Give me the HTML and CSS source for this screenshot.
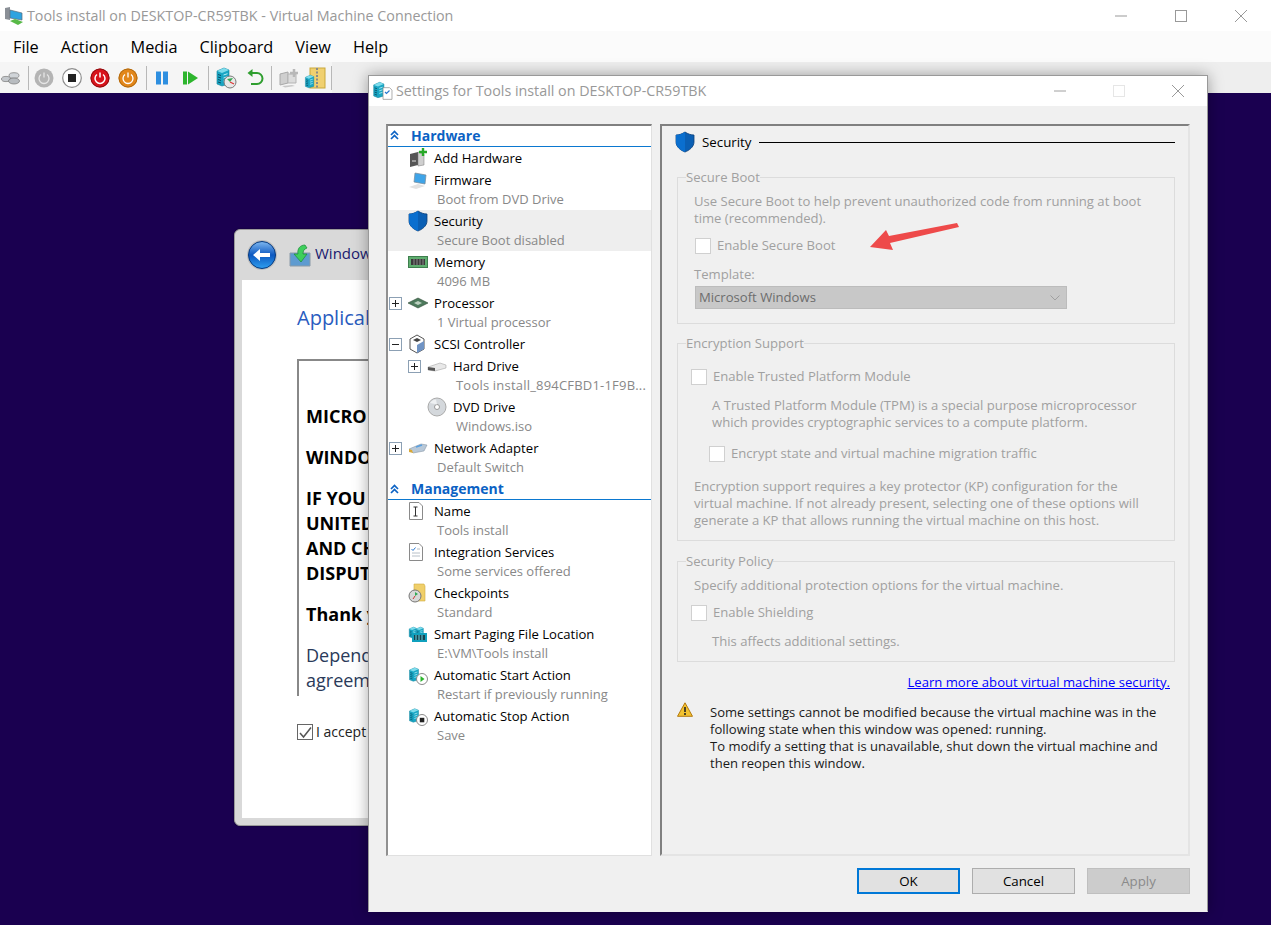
FILE: index.html
```html
<!DOCTYPE html>
<html lang="en">
<head>
<meta charset="utf-8">
<title>Tools install on DESKTOP-CR59TBK - Virtual Machine Connection</title>
<link rel="stylesheet" href="styles.css">
</head>
<body>
<svg class="defs" width="0" height="0" aria-hidden="true">
  <defs>
    <symbol id="server" viewBox="0 0 20 20">
      <path d="M2 4 L9 1 L14 3 L14 17 L7 19 L2 17Z" fill="#19a6c4" stroke="#0f7f99" stroke-width=".6"/>
      <path d="M2 4 L7 6 L14 3 L9 1Z" fill="#7fdcec"/>
      <path d="M3 7.5l3 1M3 10l3 1M3 12.5l3 1M3 15l3 1" stroke="#0a4f66" stroke-width="1"/>
      <path d="M8.500 8l4-1.300M8.500 11l4-1.300M8.500 14l4-1.300" stroke="#b4eef7" stroke-width="1"/>
    </symbol>
    <symbol id="shield" viewBox="0 0 20 22">
      <path d="M10 1 C7 3 4 4 1 4 L1 11 C1 16 6 19.500 10 21 C14 19.500 19 16 19 11 L19 4 C16 4 13 3 10 1Z" fill="#0a5fb4" stroke="#0b3f78" stroke-width=".8"/>
      <path d="M10 1 C7 3 4 4 1 4 L1 11 C1 16 6 19.500 10 21Z" fill="#0a6fcf"/>
    </symbol>
    <symbol id="page" viewBox="0 0 16 20">
      <path d="M1.500 1.500 H11 L14.500 5 V18.500 H1.500Z" fill="#fff" stroke="#8a8a8a" stroke-width="1"/>
    </symbol>
  </defs>
</svg>

<div class="vm">
  <header class="titlebar">
    <svg class="app-icon" width="20" height="20" viewBox="0 0 20 20">
      <path d="M1 2 L6 1 L6 14 L1 13Z" fill="#8a8f96"/>
      <path d="M6 4 L18 7 L18 14 L6 12Z" fill="#2ea3e0" stroke="#5b6b78" stroke-width=".7"/>
      <path d="M6 15 L14 19 L19 16 L11 13Z" fill="#58b947"/>
    </svg>
    <span class="title-text">Tools install on DESKTOP-CR59TBK - Virtual Machine Connection</span>
    <div class="caption">
      <svg class="cap-btn" width="16" height="16" viewBox="0 0 16 16"><path d="M2 8H14" stroke="#999" stroke-width="1"/></svg>
      <svg class="cap-btn" width="16" height="16" viewBox="0 0 16 16"><rect x="2.500" y="2.500" width="11" height="11" fill="none" stroke="#999"/></svg>
      <svg class="cap-btn" width="16" height="16" viewBox="0 0 16 16"><path d="M2 2L14 14M14 2L2 14" stroke="#999" stroke-width="1"/></svg>
    </div>
  </header>
  <nav class="menubar">
    <span>File</span><span>Action</span><span>Media</span><span>Clipboard</span><span>View</span><span>Help</span>
  </nav>
  <div class="toolband">
    <div class="toolbar">
      <svg class="tb first" width="20" height="14" viewBox="0 0 20 14"><ellipse cx="5" cy="8" rx="4.500" ry="2.600" fill="#c4c8cc" stroke="#777" stroke-width=".7"/><ellipse cx="13" cy="4.500" rx="5" ry="2.800" fill="#d0d4d8" stroke="#777" stroke-width=".7"/><ellipse cx="13" cy="10" rx="5.500" ry="3" fill="#b8bcc0" stroke="#777" stroke-width=".7"/></svg>
      <i class="sep s1"></i>
      <svg class="tb" width="20" height="20" viewBox="0 0 20 20"><circle cx="10" cy="10" r="9.500" fill="#b4b4b4"/><path d="M7 6.500a5 5 0 1 0 6 0M10 4.500v5" fill="none" stroke="#e6e6e6" stroke-width="1.300"/></svg>
      <svg class="tb" width="20" height="20" viewBox="0 0 20 20"><circle cx="10" cy="10" r="9.300" fill="#fff" stroke="#8d8d8d" stroke-width="1.200"/><rect x="6" y="6" width="8" height="8" fill="#222"/></svg>
      <svg class="tb" width="20" height="20" viewBox="0 0 20 20"><circle cx="10" cy="10" r="9.500" fill="#d8141c"/><circle cx="10" cy="10" r="9" fill="none" stroke="#8d0f12"/><path d="M7 6.500a5 5 0 1 0 6 0M10 4.500v5" fill="none" stroke="#fff" stroke-width="1.500"/></svg>
      <svg class="tb" width="20" height="20" viewBox="0 0 20 20"><circle cx="10" cy="10" r="9.500" fill="#e2861a"/><circle cx="10" cy="10" r="9" fill="none" stroke="#b06a10"/><path d="M7 6.500a5 5 0 1 0 6 0M10 4.500v5" fill="none" stroke="#fff" stroke-width="1.300"/></svg>
      <i class="sep"></i>
      <svg class="tb" width="20" height="20" viewBox="0 0 20 20"><rect x="4" y="3.500" width="5" height="13" fill="#2e8fe0"/><rect x="11" y="3.500" width="5" height="13" fill="#2e8fe0"/></svg>
      <svg class="tb" width="20" height="20" viewBox="0 0 20 20"><rect x="3" y="3.500" width="4" height="13" fill="#2db52d"/><path d="M8 3.500L18 10 8 16.500Z" fill="#2db52d"/></svg>
      <i class="sep s3"></i>
      <svg class="tb" width="22" height="22" viewBox="0 0 22 22"><use href="#server" width="20" height="20"/><circle cx="15" cy="15" r="6" fill="#e8e8e8" stroke="#7a7a7a"/><path d="M15 15L12 12L18 11Z" fill="#34a853"/><path d="M15 15L19 17" stroke="#d33" stroke-width="1.200"/></svg>
      <svg class="tb" width="20" height="20" viewBox="0 0 20 20"><path d="M6 5h6a4.500 4.500 0 0 1 0 11H6" fill="none" stroke="#2f9e2f" stroke-width="2"/><path d="M7.500 1L2.500 5l5 4Z" fill="#2f9e2f"/></svg>
      <i class="sep s4"></i>
      <svg class="tb" width="22" height="20" viewBox="0 0 22 20"><path d="M2 6l8-2v11l-8 2z" fill="#cfcfcf" stroke="#a8a8a8"/><path d="M10 6h8v9h-8z" fill="#dcdcdc" stroke="#b5b5b5"/><path d="M16 1v8M12 5h8" stroke="#b8b8b8" stroke-width="2.500"/><path d="M4 18l10-1 3 1-10 1.500z" fill="#c8c8c8"/></svg>
      <svg class="tb last-tb" width="22" height="22" viewBox="0 0 22 22"><rect x="6" y="1" width="15" height="20" fill="#f0d070" stroke="#c9a83a"/><path d="M13 1v20" stroke="#8a8a8a" stroke-width="2" stroke-dasharray="2 1.500"/><use href="#server" x="0" y="7" width="14" height="15"/></svg>
      <i class="sep end"></i>
    </div>
  </div>

  <main class="desktop">
    <section class="setup">
      <div class="setup-head">
        <svg width="30" height="30" viewBox="0 0 30 30" class="back">
          <defs><linearGradient id="bk" x1="0" y1="0" x2="0" y2="1"><stop offset="0" stop-color="#7fb8f0"/><stop offset=".5" stop-color="#0d58c0"/><stop offset="1" stop-color="#2f9ff0"/></linearGradient></defs>
          <circle cx="15" cy="15" r="15" fill="#bdbdbd"/><circle cx="15" cy="15" r="13.500" fill="url(#bk)" stroke="#053a80"/>
          <path d="M6 15l7-6v4h10v4H13v4z" fill="#fff"/>
        </svg>
        <svg width="22" height="24" viewBox="0 0 22 24" class="setup-ico">
          <path d="M1 10h20v13H1z" fill="#5e9bd0" stroke="#8a9aa8"/>
          <path d="M16 2C11 2 8 6 9 11H5l7 8 6-8h-4c0-3 1-5 4-6z" fill="#3ecf5c" stroke="#1a8a38" stroke-width=".7"/>
        </svg>
        <span class="setup-title">Windows</span>
      </div>
      <div class="setup-body">
        <h2 class="setup-h">Applicable</h2>
        <div class="license">
          <p class="b">MICRO</p>
          <p class="b">WINDOWS</p>
          <p class="b">IF YOU<br>UNITED<br>AND CHECK<br>DISPUTES</p>
          <p class="b">Thank you</p>
          <p class="n">Depending<br>agreement</p>
        </div>
        <div class="accept"><span class="acc-box"><svg width="15" height="15" viewBox="0 0 15 15"><path d="M2 8l3.500 4L13 2.500" fill="none" stroke="#555" stroke-width="1.500"/></svg></span>I accept</div>
      </div>
    </section>

    <section class="dialog">
      <header class="dlg-title">
        <svg width="22" height="22" viewBox="0 0 22 22" class="dlg-ico"><use href="#server" width="17" height="20"/><use href="#page" x="10" y="6" width="11" height="15"/><path d="M13 12l1.500 1.500 3-3" stroke="#2a78d0" fill="none" stroke-width="1.200"/></svg>
        <span class="dlg-text">Settings for Tools install on DESKTOP-CR59TBK</span>
        <div class="dlg-caption">
          <svg width="14" height="14" viewBox="0 0 14 14"><path d="M1 7H13" stroke="#a0a0a0"/></svg>
          <svg width="14" height="14" viewBox="0 0 14 14"><rect x="1.500" y="1.500" width="11" height="11" fill="none" stroke="#e6e6e6"/></svg>
          <svg width="14" height="14" viewBox="0 0 14 14"><path d="M1 1L13 13M13 1L1 13" stroke="#999"/></svg>
        </div>
      </header>
      <div class="dlg-body">
        <div class="panes">
          <aside class="tree">
            <div class="group"><svg class="chev" width="9" height="10" viewBox="0 0 9 10"><path d="M1 5l3.500-3.500L8 5M1 9l3.500-3.500L8 9" fill="none" stroke="#0b62c4" stroke-width="1.700"/></svg><b>Hardware</b></div>
            <div class="item one">
              <div class="head"><span class="exp"></span><span class="ico"><svg width="20" height="20" viewBox="0 0 20 20"><path d="M2 6l8-2v13l-8 2z" fill="#555"/><path d="M10 4l6 2v11l-6 1z" fill="#cfcfcf" stroke="#777" stroke-width=".5"/><path d="M4 13h4" stroke="#ddd"/><path d="M15 0v8M11 4h8" stroke="#27a827" stroke-width="2.400"/></svg></span>Add Hardware</div>
            </div>
            <div class="item">
              <div class="head"><span class="exp"></span><span class="ico"><svg width="20" height="20" viewBox="0 0 20 20"><path d="M7 3l11 2-1 9L6 12z" fill="#3fa4e8" stroke="#7a8a96" stroke-width=".7"/><path d="M1 17l9-3 7 2-9 3z" fill="#e2e2e2"/></svg></span>Firmware</div>
              <div class="sub">Boot from DVD Drive</div>
            </div>
            <div class="item sel">
              <div class="head"><span class="exp"></span><span class="ico"><svg width="20" height="22" viewBox="0 0 20 22"><use href="#shield"/></svg></span>Security</div>
              <div class="sub">Secure Boot disabled</div>
            </div>
            <div class="item">
              <div class="head"><span class="exp"></span><span class="ico"><svg width="20" height="14" viewBox="0 0 20 14"><rect x=".5" y="1.500" width="19" height="11" fill="#5fae6f" stroke="#3e7f4e"/><path d="M3 4h14v6H3z" fill="#3a3a3a"/><path d="M6 4v6M9 4v6M12 4v6M15 4v6" stroke="#888"/></svg></span>Memory</div>
              <div class="sub">4096 MB</div>
            </div>
            <div class="item">
              <div class="head"><span class="exp plus"></span><span class="ico"><svg width="20" height="12" viewBox="0 0 20 12"><path d="M0 6l10-5 10 5-10 5z" fill="#4d7a5c" stroke="#2f4a38" stroke-width=".6"/><path d="M6 6l4-2 4 2-4 2z" fill="#bcd0c0"/></svg></span>Processor</div>
              <div class="sub">1 Virtual processor</div>
            </div>
            <div class="item one">
              <div class="head"><span class="exp minus"></span><span class="ico"><svg width="20" height="20" viewBox="0 0 20 20"><path d="M2 5l7-4 7 4v10l-7 4-7-4z" fill="#fff" stroke="#555"/><path d="M9 19l7-4V7l-7 4z" fill="#6f93c4"/><path d="M5 6l4-2 4 2-4 2z" fill="#444"/></svg></span>SCSI Controller</div>
            </div>
            <div class="item child">
              <div class="head"><span class="exp plus"></span><span class="ico"><svg width="20" height="12" viewBox="0 0 20 12"><path d="M1 7l12-4 6 2v3L8 11 1 10z" fill="#e8e8e8" stroke="#999" stroke-width=".5"/><path d="M1 7l7 1v3L1 10z" fill="#555"/></svg></span>Hard Drive</div>
              <div class="sub hash">Tools install_894CFBD1-1F9B...</div>
            </div>
            <div class="item child">
              <div class="head"><span class="exp"></span><span class="ico"><svg width="20" height="20" viewBox="0 0 20 20"><circle cx="10" cy="10" r="9" fill="#d4d8dc" stroke="#aaa"/><circle cx="10" cy="10" r="2.500" fill="#fff" stroke="#999"/><path d="M3 6a8 8 0 0 1 6-3.500L10 7.500z" fill="#eef0f2"/></svg></span>DVD Drive</div>
              <div class="sub">Windows.iso</div>
            </div>
            <div class="item">
              <div class="head"><span class="exp plus"></span><span class="ico"><svg width="20" height="12" viewBox="0 0 20 12"><path d="M1 7l12-5 6 1-3 6-11 2z" fill="#b8c8d8" stroke="#7a8a9a" stroke-width=".5"/><path d="M1 7l3 1 1 3-4-1z" fill="#d8a838"/><path d="M8 5l6-2" stroke="#5aa0e0" stroke-width="1.500"/></svg></span>Network Adapter</div>
              <div class="sub">Default Switch</div>
            </div>
            <div class="group mgmt"><svg class="chev" width="9" height="10" viewBox="0 0 9 10"><path d="M1 5l3.500-3.500L8 5M1 9l3.500-3.500L8 9" fill="none" stroke="#0b62c4" stroke-width="1.700"/></svg><b>Management</b></div>
            <div class="item">
              <div class="head"><span class="exp"></span><span class="ico"><svg width="16" height="20" viewBox="0 0 16 20"><use href="#page"/><path d="M5.500 6h4M7.500 6v9M5.500 15h4" stroke="#333" fill="none"/></svg></span>Name</div>
              <div class="sub">Tools install</div>
            </div>
            <div class="item">
              <div class="head"><span class="exp"></span><span class="ico"><svg width="16" height="20" viewBox="0 0 16 20"><use href="#page"/><path d="M3.500 7l1.500 1.500 2.500-3" stroke="#2a78d0" fill="none"/><path d="M9 7h3M4 11h8M4 14h8" stroke="#b8c0c8"/></svg></span>Integration Services</div>
              <div class="sub">Some services offered</div>
            </div>
            <div class="item">
              <div class="head"><span class="exp"></span><span class="ico"><svg width="20" height="20" viewBox="0 0 20 20"><path d="M6 1h10l1 2v15H6z" fill="#f0cf6a" stroke="#d0ac40" stroke-width=".6"/><circle cx="7" cy="13" r="6" fill="#d8d8d8" stroke="#777"/><path d="M7 13V9l3 2z" fill="#34a853"/><path d="M7 13l-2 3" stroke="#c33"/></svg></span>Checkpoints</div>
              <div class="sub">Standard</div>
            </div>
            <div class="item">
              <div class="head"><span class="exp"></span><span class="ico"><svg width="20" height="18" viewBox="0 0 20 18"><use href="#server" width="12" height="15"/><use href="#server" x="7" y="0" width="12" height="15"/><rect x="4" y="8" width="15" height="9" fill="#0fa0bd"/><path d="M6 10h11v5H6z" fill="#16444f"/><path d="M8 10v5M11 10v5M14 10v5" stroke="#6ad4e4"/></svg></span>Smart Paging File Location</div>
              <div class="sub">E:\VM\Tools install</div>
            </div>
            <div class="item">
              <div class="head"><span class="exp"></span><span class="ico"><svg width="20" height="20" viewBox="0 0 20 20"><use href="#server" width="15" height="19"/><circle cx="14" cy="14" r="5.500" fill="#fff" stroke="#8a8a8a"/><path d="M12.500 11l4 3-4 3z" fill="#2db52d"/></svg></span>Automatic Start Action</div>
              <div class="sub">Restart if previously running</div>
            </div>
            <div class="item">
              <div class="head"><span class="exp"></span><span class="ico"><svg width="20" height="20" viewBox="0 0 20 20"><use href="#server" width="15" height="19"/><circle cx="14" cy="14" r="5.500" fill="#fff" stroke="#8a8a8a"/><rect x="11.800" y="11.800" width="4.500" height="4.500" fill="#222"/></svg></span>Automatic Stop Action</div>
              <div class="sub">Save</div>
            </div>
          </aside>

          <div class="pane">
            <div class="pane-head">
              <svg width="20" height="22" viewBox="0 0 20 22"><use href="#shield"/></svg>
              <span>Security</span><i class="rule"></i>
            </div>
            <fieldset class="box box-boot">
              <legend>Secure Boot</legend>
              <p class="txt">Use Secure Boot to help prevent unauthorized code from running at boot<br>time (recommended).</p>
              <label class="check tight"><span class="cb"></span>Enable Secure Boot</label>
              <div class="tpl-label">Template:</div>
              <div class="select">Microsoft Windows<svg width="10" height="6" viewBox="0 0 10 6"><path d="M.5.500L5 5l4.500-4.500" fill="none" stroke="#a0a0a0"/></svg></div>
            </fieldset>
            <fieldset class="box box-enc">
              <legend>Encryption Support</legend>
              <label class="check"><span class="cb"></span>Enable Trusted Platform Module</label>
              <p class="txt indent">A Trusted Platform Module (TPM) is a special purpose microprocessor<br>which provides cryptographic services to a compute platform.</p>
              <label class="check nested"><span class="cb"></span>Encrypt state and virtual machine migration traffic</label>
              <p class="txt after">Encryption support requires a key protector (KP) configuration for the<br>virtual machine. If not already present, selecting one of these options will<br>generate a KP that allows running the virtual machine on this host.</p>
            </fieldset>
            <fieldset class="box box-pol">
              <legend>Security Policy</legend>
              <p class="txt">Specify additional protection options for the virtual machine.</p>
              <label class="check shield"><span class="cb"></span>Enable Shielding</label>
              <p class="txt indent last">This affects additional settings.</p>
            </fieldset>
            <div class="link-row"><a class="link" href="#">Learn more about virtual machine security.</a></div>
            <div class="warn">
              <svg width="16" height="15" viewBox="0 0 16 15"><path d="M8 .8L15.500 14.300H.5Z" fill="#f2c230" stroke="#b47a10"/><path d="M8 5v5M8 11v2" stroke="#222" stroke-width="1.600"/></svg>
              <p>Some settings cannot be modified because the virtual machine was in the<br>following state when this window was opened: running.<br>To modify a setting that is unavailable, shut down the virtual machine and<br>then reopen this window.</p>
            </div>
          </div>
        </div>
        <footer class="buttons">
          <button class="btn ok">OK</button>
          <button class="btn">Cancel</button>
          <button class="btn off">Apply</button>
        </footer>
      </div>
      <svg class="arrow" width="92" height="30" viewBox="0 0 92 30"><path d="M89 1L91 5 22 21 25 28 2 25 18 8 21 14Z" fill="#ee4a4a"/></svg>
    </section>
  </main>
</div>
</body>
</html>
```
FILE: styles.css
```css
* { box-sizing: border-box; }
html, body { margin: 0; height: 100%; overflow: hidden; }
body { font-family: "Open Sans", "Noto Sans", "Liberation Sans", sans-serif; font-size: 13px; color: #000; background: #1a0050; }
.defs { position: absolute; }

.vm { width: 1271px; height: 925px; display: flex; flex-direction: column; }
.titlebar { height: 31px; background: #fff; display: flex; align-items: center; padding-left: 4px; flex: none; }
.app-icon { flex: none; }
.title-text { margin-left: 3px; font-size: 14.300px; color: #999; }
.caption { margin-left: auto; display: flex; gap: 44px; padding-right: 22px; }

.menubar { height: 31px; background: #fbfbfb; display: flex; align-items: center; gap: 22px; padding-left: 13px; font-size: 16.300px; flex: none; }

.toolband { height: 31px; background: #eeeeee; flex: none; }
.toolbar { width: 332px; height: 31px; background: #f5f5f5; display: flex; align-items: center; padding-left: 1px; }
.tb { flex: none; margin: 0 4px; }
.tb.first { margin: 0; }
.tb.last-tb { margin-left: 0; }
.sep { width: 1px; height: 24px; background: #b8b8b8; margin: 0 1px 0 4px; flex: none; }
.sep.s1 { margin-left: 7px; }
.sep.s3 { margin-right: 2px; }
.sep.s4 { margin: 0 2px; }
.sep.end { margin: 0 0 0 auto; }

.desktop { flex: 1; position: relative; background: #1a0050; }

.setup { position: absolute; left: 234px; top: 136px; width: 560px; height: 597px; background: #d9d9d9; border-radius: 6px; border: 1px solid #9a9a9a; padding: 0 7px 7px; display: flex; flex-direction: column; box-shadow: 0 0 2px rgba(0,0,0,.5); }
.setup-head { height: 50px; display: flex; align-items: center; padding-left: 5px; flex: none; }
.setup-ico { margin-left: 12px; }
.setup-title { margin-left: 4px; font-size: 15px; color: #1a1a6e; padding-bottom: 4px; }
.setup-body { flex: 1; background: #fff; padding: 24px 0 0 55px; }
.setup-h { margin: 0; font-size: 20px; font-weight: 400; color: #2a5cc0; line-height: 27px; }
.license { height: 337px; width: 480px; margin-top: 28px; border-top: 2px solid #888; border-left: 2px solid #888; padding: 43px 0 0 7px; overflow: hidden; font-size: 18px; line-height: 25px; white-space: nowrap; }
.license p { margin: 0 0 16px; }
.license .b { font-weight: 700; }
.license .n { color: #2a3a5a; }
.accept { display: flex; align-items: center; margin-top: 26px; font-size: 14px; color: #222; gap: 3px; }
.acc-box { width: 16px; height: 16px; border: 1px solid #666; display: block; line-height: 0; }

.dialog { position: absolute; left: 368px; top: -18px; width: 840px; height: 837px; background: #f0f0f0; border: 1px solid #999; border-bottom-color: #f0f0f0; box-shadow: 0 0 14px rgba(0,0,0,.35); display: flex; flex-direction: column; }
.dlg-title { height: 30px; background: #fff; display: flex; align-items: center; padding-left: 3px; flex: none; }
.dlg-ico { flex: none; }
.dlg-text { margin-left: 2px; padding-bottom: 2px; font-size: 14.300px; color: #999; }
.dlg-caption { margin-left: auto; display: flex; gap: 45px; padding-right: 22px; }
.dlg-body { flex: 1; display: flex; flex-direction: column; padding: 18px 17px 17px; }
.panes { display: flex; gap: 8px; height: 732px; flex: none; }

.tree { width: 266px; background: #fff; border-top: 2px solid #808080; border-left: 2px solid #909090; border-right: 1px solid #e0e0e0; border-bottom: 1px solid #e0e0e0; flex: none; }
.group { height: 21px; display: flex; align-items: center; border-bottom: 1px solid #0b78d0; padding: 0 0 2px 2px; color: #0b62c4; font-size: 14px; }
.group.mgmt { height: 22px; padding-bottom: 0; }
.group b { margin-left: 12px; font-weight: 700; }
.chev { flex: none; }
.item { height: 41px; }
.item.one { height: 22px; }
.item.sel { background: #eeeeee; }
.head { height: 22px; display: flex; align-items: center; white-space: nowrap; font-size: 13.100px; line-height: 17px; color: #000; }
.exp { width: 13px; height: 13px; margin: 0 6px 0 1px; flex: none; position: relative; }
.exp.plus, .exp.minus { border: 1px solid #8ca0b4; background: #fff; }
.exp.plus::before, .exp.minus::before { content: ""; position: absolute; left: 2px; top: 5px; width: 7px; height: 1px; background: #222; }
.exp.plus::after { content: ""; position: absolute; left: 5px; top: 2px; width: 1px; height: 7px; background: #222; }
.ico { width: 26px; flex: none; display: flex; align-items: center; }
.sub { height: 19px; line-height: 17px; margin-left: 49px; font-size: 13px; color: #888; white-space: nowrap; }
.sub.hash { letter-spacing: .2px; }
.child .head { padding-left: 19px; }
.child .sub { margin-left: 68px; }

.pane { width: 530px; flex: none; background: #f0f0f0; border-top: 2px solid #808080; border-left: 2px solid #808080; border-right: 2px solid #e4e4e4; border-bottom: 2px solid #e4e4e4; padding: 5px 13px 0 15px; }
.pane-head { display: flex; align-items: center; height: 22px; gap: 7px; font-size: 13.300px; margin-left: -2px; }
.pane-head .rule { flex: 1; height: 1px; background: #000; margin-left: 1px; }
.box { margin: 0; border: 1px solid #dcdcdc; padding: 0 0 0 16px; color: #a0a0a0; font-size: 13.100px; line-height: 17px; min-width: 0; }
.box legend { padding: 0; margin-left: -8px; color: #a0a0a0; line-height: 17px; }
.txt { margin: 0; white-space: nowrap; }
.box-boot { margin-top: 16px; height: 155px; padding-top: 7px; }
.box-enc { margin-top: 11px; height: 206px; padding-top: 16px; }
.box-pol { margin-top: 12px; height: 109px; padding-top: 7px; }
.check { display: flex; align-items: center; gap: 6px; height: 17px; margin-left: -3px; }
.check.tight { margin-left: 1px; margin-top: 10px; }
.cb { width: 16px; height: 16px; background: #fff; border: 1px solid #d0d0d0; flex: none; }
.indent { margin-left: 18px; margin-top: 12px; }
.check.nested { margin-left: 15px; margin-top: 14px; }
.after { margin-top: 16px; }
.check.shield { margin-top: 10px; }
.last { margin-top: 12px; }
.tpl-label { margin-top: 12px; }
.select { width: 372px; height: 23px; margin: 3px 0 0 1px; background: #c8c8c8; border: 1px solid #bcbcbc; color: #6d6d6d; display: flex; align-items: center; justify-content: space-between; padding: 0 6px 0 3px; }
.link-row { text-align: right; margin-top: 12px; line-height: 17px; padding-right: 5px; }
.link { color: #0000ff; font-size: 13.100px; text-decoration: underline; }
.warn { display: flex; gap: 17px; margin-top: 11px; }
.warn svg { flex: none; }
.warn p { margin: 2px 0 0; font-size: 13.050px; line-height: 17px; color: #1a1a1a; white-space: nowrap; }

.buttons { display: flex; justify-content: flex-end; gap: 12px; margin-top: 12px; }
.btn { width: 103px; height: 26px; background: #e1e1e1; border: 1px solid #adadad; font: inherit; font-size: 13.300px; color: #000; padding: 0; }
.btn.ok { border: 2px solid #0078d7; }
.btn.off { background: #cccccc; border-color: #bfbfbf; color: #8a8a8a; }

.arrow { position: absolute; left: 499px; top: 146px; }
```
